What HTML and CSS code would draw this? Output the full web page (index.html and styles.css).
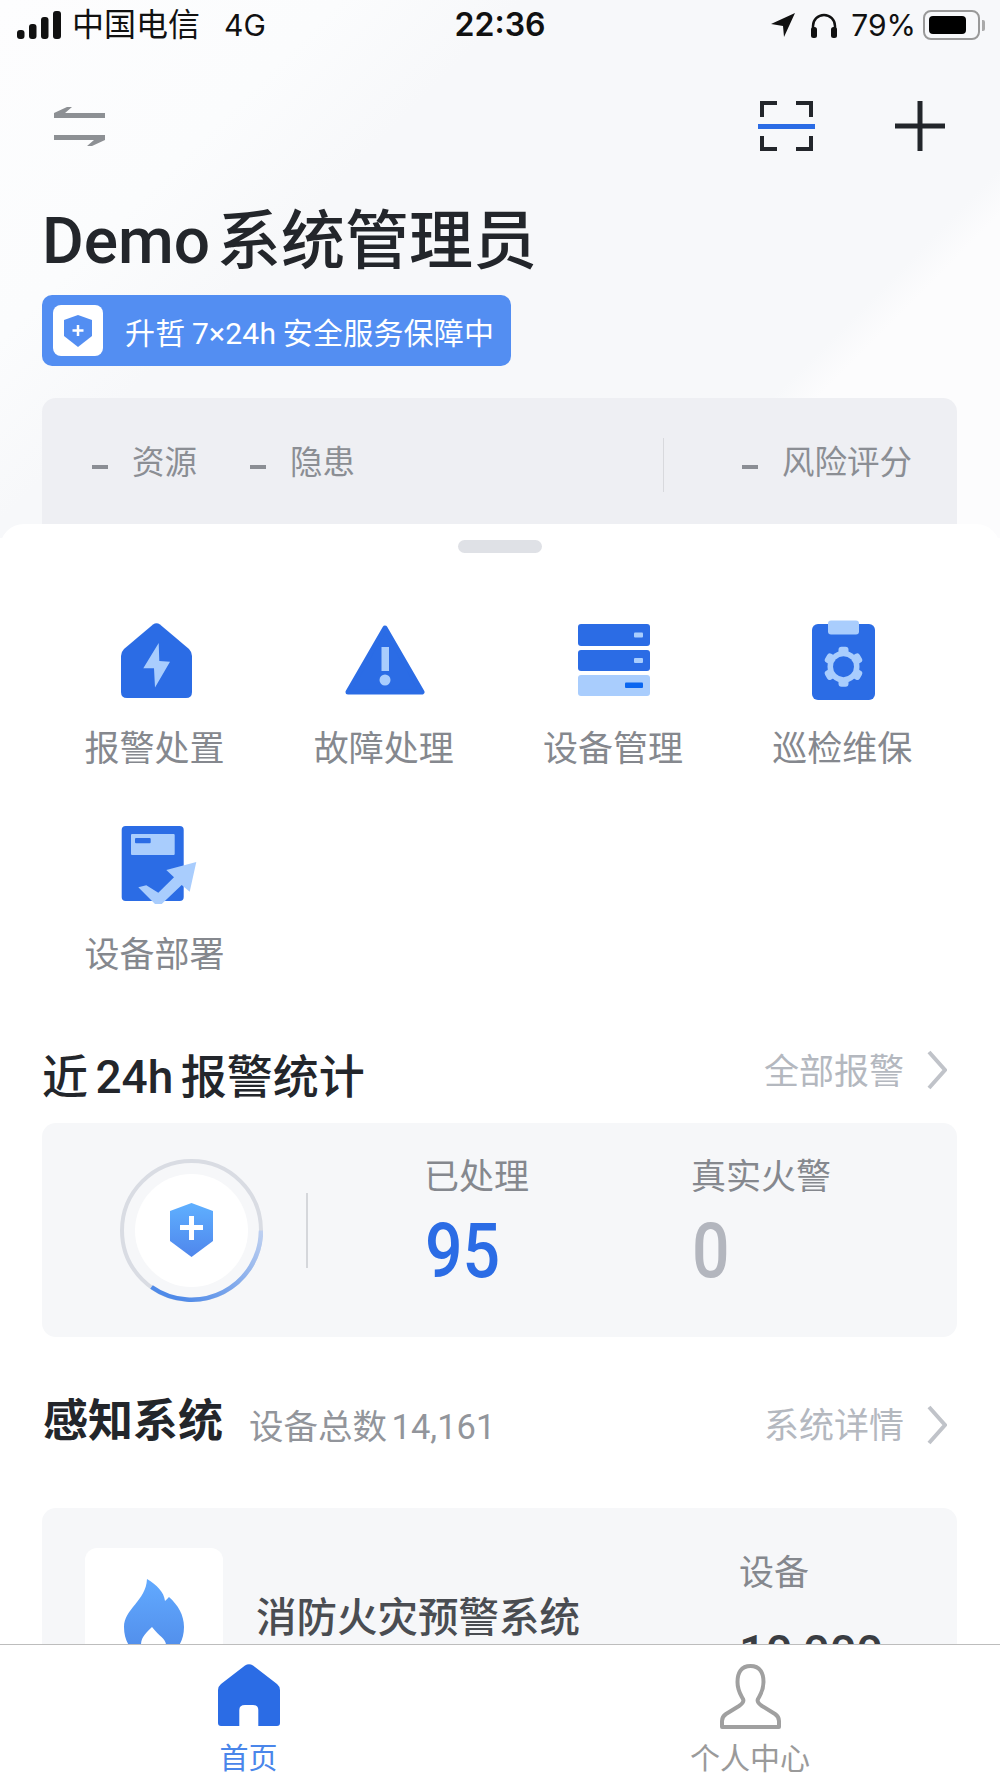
FILE: index.html
```html
<!DOCTYPE html>
<html lang="zh-CN">
<head>
    <meta charset="UTF-8">
    <meta name="viewport" content="width=device-width, initial-scale=1.0">
    <title>Demo 系统管理员</title>
    <link rel="stylesheet" href="styles.css">
</head>
<body>
<div class="app">
    <div class="main">
        <div class="head">
            <div class="status-bar">
                <div class="status-left">
                    <svg class="signal" width="44" height="28" viewBox="0 0 44 28">
                        <rect x="0" y="19" width="7.5" height="9" rx="3"/>
                        <rect x="12" y="13" width="7.5" height="15" rx="3"/>
                        <rect x="24" y="6" width="7.5" height="22" rx="3"/>
                        <rect x="36" y="0" width="8" height="28" rx="3"/>
                    </svg>
                    <span class="carrier">中国电信</span>
                    <span class="network">4G</span>
                </div>
                <div class="status-time">22:36</div>
                <div class="status-right">
                    <svg width="24" height="24" viewBox="0 0 24 24"><path d="M0 11 24 0 13 24 12 13Z" fill="#111"/></svg>
                    <svg class="headphones" width="28" height="25" viewBox="0 0 28 25">
                        <path d="M3 18V13a11 11 0 0 1 22 0v5" fill="none" stroke="#111" stroke-width="2.5"/>
                        <rect x="1" y="14" width="6" height="11" rx="2.5" fill="#111"/>
                        <rect x="21" y="14" width="6" height="11" rx="2.5" fill="#111"/>
                    </svg>
                    <span class="percent">79%</span>
                    <div class="battery"><div class="battery-level"></div></div>
                    <div class="battery-nub"></div>
                </div>
            </div>

            <div class="top-actions">
                <svg width="51" height="39" viewBox="0 0 51 39" fill="#8d9094">
                    <path d="M0 6 13 0h5l-7 6h40v5H0Z"/>
                    <path d="M0 28h51v5l-13 6h-5l7-6H0Z"/>
                </svg>
                <div class="top-actions-right">
                    <svg width="57" height="50" viewBox="0 0 57 50" fill="none">
                        <path d="M4 16V2h15M38 2h15v14M4 35v13h15M38 48h15V35" stroke="#23262b" stroke-width="4"/>
                        <path d="M0 25.500h57" stroke="#2b6ce5" stroke-width="5"/>
                    </svg>
                    <svg width="50" height="50" viewBox="0 0 50 50" fill="none">
                        <path d="M25 0v50M0 25h50" stroke="#23262b" stroke-width="5"/>
                    </svg>
                </div>
            </div>

            <h1 class="title">Demo 系统管理员</h1>

            <div class="badge">
                <div class="badge-icon">
                    <svg width="28" height="32" viewBox="0 0 28 32">
                        <path d="M14 0 28 5V21L14 32 0 21V5Z" fill="#538ef2"/>
                        <path d="M14 10v11M8.500 15.500h11" stroke="#fff" stroke-width="2.500"/>
                    </svg>
                </div>
                <span>升哲 7×24h 安全服务保障中</span>
            </div>

            <div class="overview">
                <div class="overview-left">
                    <div class="overview-item"><i></i><span>资源</span></div>
                    <div class="overview-item"><i></i><span>隐患</span></div>
                </div>
                <div class="overview-right">
                    <div class="overview-item"><i></i><span>风险评分</span></div>
                </div>
            </div>
        </div>

        <div class="sheet">
            <div class="handle"></div>

            <div class="menu">
                <div class="menu-item">
                    <div class="menu-icon">
                        <svg width="71" height="75" viewBox="0 0 71 75">
                            <path d="M32 1.500Q35.500-1 39 1.500L68 26Q71 29 71 33V69Q71 75 65 75H6Q0 75 0 69V33Q0 29 3 26Z" fill="#2b6ce5"/>
                            <path d="M37.700 20 22.300 45.300H33L34 64.500 49 38.700 38.300 38Z" fill="#a9cdfd"/>
                        </svg>
                    </div>
                    <div class="menu-label">报警处置</div>
                </div>
                <div class="menu-item">
                    <div class="menu-icon">
                        <svg width="80" height="70" viewBox="0 0 80 70">
                            <path d="M40 3 77 67H3Z" fill="#2b6ce5" stroke="#2b6ce5" stroke-width="5" stroke-linejoin="round"/>
                            <rect x="36.500" y="22" width="7.500" height="24" fill="#a9cdfd"/>
                            <circle cx="40" cy="55" r="5.500" fill="#a9cdfd"/>
                        </svg>
                    </div>
                    <div class="menu-label">故障处理</div>
                </div>
                <div class="menu-item">
                    <div class="menu-icon">
                        <svg width="72" height="72" viewBox="0 0 72 72">
                            <rect x="0" y="0" width="72" height="22" rx="3" fill="#2b6ce5"/>
                            <rect x="0" y="26" width="72" height="21" rx="3" fill="#2b6ce5"/>
                            <rect x="0" y="51" width="72" height="21" rx="3" fill="#a9cdfd"/>
                            <rect x="56" y="8.500" width="9" height="5" rx="1" fill="#a9cdfd"/>
                            <rect x="56" y="34" width="9" height="5" rx="1" fill="#a9cdfd"/>
                            <rect x="47" y="58.500" width="18" height="5.500" rx="1" fill="#0a66f0"/>
                        </svg>
                    </div>
                    <div class="menu-label">设备管理</div>
                </div>
                <div class="menu-item">
                    <div class="menu-icon">
                        <svg width="63" height="80" viewBox="0 0 63 80">
                            <rect x="0" y="4" width="63" height="76" rx="6" fill="#2b6ce5"/>
                            <rect x="16" y="0.500" width="31" height="14" rx="3" fill="#a9cdfd"/>
                            <g transform="translate(31.500 46.700)" fill="#a9cdfd">
                                <rect x="-5" y="-20" width="10" height="40" rx="3"/>
                                <rect x="-5" y="-20" width="10" height="40" rx="3" transform="rotate(60)"/>
                                <rect x="-5" y="-20" width="10" height="40" rx="3" transform="rotate(120)"/>
                                <circle r="16"/>
                                <circle r="10.500" fill="#2b6ce5"/>
                            </g>
                        </svg>
                    </div>
                    <div class="menu-label">巡检维保</div>
                </div>
                <div class="menu-item">
                    <div class="menu-icon">
                        <svg class="deploy" width="77" height="80" viewBox="0 0 77 80">
                            <rect x="0.700" y="0" width="62" height="75" rx="4" fill="#2b6ce5"/>
                            <rect x="10" y="8" width="43.700" height="21" rx="1" fill="#a9cdfd"/>
                            <rect x="14" y="12" width="15.700" height="5.300" rx="1" fill="#2b6ce5"/>
                            <path d="M17.300 61.300 25.300 59.300 37.300 66.700 53 51.300 45.300 44 75.300 36 68.700 65.700 60.700 59 40.700 78H34Z" fill="#a9cdfd"/>
                        </svg>
                    </div>
                    <div class="menu-label">设备部署</div>
                </div>
            </div>

            <div class="section-head section-alarm">
                <h2 class="section-title">近 24h 报警统计</h2>
                <div class="section-link">
                    <span>全部报警</span>
                    <svg width="20" height="40" viewBox="0 0 20 40" fill="none"><path d="M2 2 18 20 2 38" stroke="#c0c3c9" stroke-width="4"/></svg>
                </div>
            </div>

            <div class="alarm-card">
                <div class="ring">
                    <div class="ring-inner">
                        <svg width="43" height="54" viewBox="0 0 43 54">
                            <defs>
                                <linearGradient id="shield" x1="0" y1="0" x2="0" y2="1">
                                    <stop offset="0" stop-color="#5fb0ff"/>
                                    <stop offset="1" stop-color="#4f86ec"/>
                                </linearGradient>
                            </defs>
                            <path d="M21.500 0 43 8V38L21.500 54 0 38V8Z" fill="url(#shield)"/>
                            <path d="M21.500 13v24M10 24.500h23" stroke="#fff" stroke-width="5"/>
                        </svg>
                    </div>
                    <svg class="ring-track" width="143" height="143" viewBox="0 0 143 143" fill="none">
                        <defs>
                            <linearGradient id="arc" gradientUnits="userSpaceOnUse" x1="141" y1="60" x2="60" y2="140">
                                <stop offset="0" stop-color="#c6d5f1"/>
                                <stop offset="1" stop-color="#4f8ae8"/>
                            </linearGradient>
                        </defs>
                        <circle cx="71.500" cy="71.500" r="69.500" stroke="#d9dce3" stroke-width="4"/>
                        <path d="M141 71.500A69.500 69.500 0 0 1 31.500 128" stroke="url(#arc)" stroke-width="4.500"/>
                    </svg>
                </div>
                <div class="alarm-divider"></div>
                <div class="alarm-stat alarm-done">
                    <div class="alarm-label">已处理</div>
                    <div class="alarm-num blue">95</div>
                </div>
                <div class="alarm-stat">
                    <div class="alarm-label">真实火警</div>
                    <div class="alarm-num gray">0</div>
                </div>
            </div>

            <div class="section-head section-system">
                <div class="section-left">
                    <h2 class="section-title bold">感知系统</h2>
                    <span class="section-sub">设备总数 14,161</span>
                </div>
                <div class="section-link">
                    <span>系统详情</span>
                    <svg width="20" height="40" viewBox="0 0 20 40" fill="none"><path d="M2 2 18 20 2 38" stroke="#c0c3c9" stroke-width="4"/></svg>
                </div>
            </div>

            <div class="system-card">
                <div class="system-icon">
                    <svg width="60" height="80" viewBox="0 0 60 80">
                        <defs>
                            <linearGradient id="flame" x1="0" y1="0" x2="0" y2="1">
                                <stop offset="0" stop-color="#62aaff"/>
                                <stop offset="1" stop-color="#4f8ae8"/>
                            </linearGradient>
                        </defs>
                        <path fill-rule="evenodd" d="M23 0C33 6 40 13 41 22 43 20 44 19 45 18 54 26 60 36 60 48 60 68 46 80 30 80 14 80 0 68 0 48 0 30 22 22 23 0ZM28 48C22 54 17 58 17 66 17 74 22 78 29 78 36 78 42 74 42 66 42 60 36 58 28 48Z" fill="url(#flame)"/>
                    </svg>
                </div>
                <div class="system-name">消防火灾预警系统</div>
                <div class="system-stat">
                    <div class="system-stat-label">设备</div>
                    <div class="system-stat-num">10,000</div>
                </div>
            </div>
        </div>
    </div>

    <div class="tabbar">
        <div class="tab tab-home">
            <svg width="62" height="63" viewBox="0 0 62 63">
                <path fill-rule="evenodd" d="M27 1.500Q31-1 35 1.500L59 20Q62 22.500 62 26V59Q62 62 59 62H40.300V46Q40.300 41 35 41H27Q21.300 41 21.300 46V62H3Q0 62 0 59V26Q0 22.500 3 20Z" fill="#2b6ce5"/>
            </svg>
            <div class="tab-label active">首页</div>
        </div>
        <div class="tab">
            <svg width="61" height="65" viewBox="0 0 61 65">
                <path d="M30.500 2C21 2 17.500 9 17.500 18 17.500 27 21 31 23 35 24.500 38 22 40 19 42L6 50C3 52 2 54 2 57V63H59V57C59 54 58 52 55 50L42 42C39 40 36.500 38 38 35 40 31 43.500 27 43.500 18 43.500 9 40 2 30.500 2Z" fill="none" stroke="#a0a0a0" stroke-width="4" stroke-linejoin="round"/>
            </svg>
            <div class="tab-label">个人中心</div>
        </div>
    </div>
</div>
</body>
</html>
```

FILE: styles.css
```css
* {
    box-sizing: border-box;
}
body {
    margin: 0;
    background-color: white;
    font-family: Roboto, "Noto Sans CJK SC", sans-serif;
    color: #23262b;
}
.app {
    height: 1778px;
    display: flex;
    flex-direction: column;
    overflow: hidden;
}
.main {
    flex: 1;
    min-height: 0;
    overflow: hidden;
}

/* top area */
.head {
    height: 538px;
    padding: 0 43px 0 42px;
    background: linear-gradient(135deg, #fdfdfe 0%, #fbfcfd 22%, #f7f8fa 34%, #f7f8fa 76%, #fcfcfd 79%, #fcfcfd 100%);
}
.status-bar {
    height: 50px;
    margin: 0 -43px 0 -42px;
    padding: 0 15px 0 17px;
    display: grid;
    grid-template-columns: 1fr auto 1fr;
    align-items: center;
    color: #111;
    font-family: Inter, "Noto Sans CJK SC", sans-serif;
}
.status-left,
.status-right {
    display: flex;
    align-items: center;
}
.status-right {
    justify-content: flex-end;
}
.signal {
    fill: #111;
    margin-right: 11px;
}
.carrier {
    font-size: 32px;
    line-height: 50px;
    margin-right: 24px;
}
.network {
    font-size: 30px;
    line-height: 50px;
}
.status-time {
    margin-right: 2px;
    font-size: 32px;
    font-weight: 600;
    line-height: 50px;
}
.headphones {
    margin-left: 15px;
}
.percent {
    font-size: 30px;
    line-height: 50px;
    margin: 0 7px 0 13px;
}
.battery {
    width: 57px;
    height: 30px;
    padding: 4px;
    border: 2px solid #999;
    border-radius: 8px;
}
.battery-level {
    width: 37px;
    height: 100%;
    background-color: black;
    border-radius: 4px;
}
.battery-nub {
    width: 3px;
    height: 11px;
    margin-left: 2px;
    background-color: #aaa;
    border-radius: 0 2px 2px 0;
}
.top-actions {
    height: 50px;
    margin: 51px 12px 0 12px;
    display: flex;
    align-items: center;
    justify-content: space-between;
}
.top-actions-right {
    display: flex;
    align-items: center;
    gap: 80px;
}
.title {
    margin: 53px 0 0 0;
    font-size: 64px;
    font-weight: 500;
    line-height: 76px;
    word-spacing: -9px;
    color: #23262b;
    white-space: nowrap;
}
.badge {
    width: 469px;
    height: 71px;
    margin-top: 15px;
    padding: 0 11px;
    display: flex;
    align-items: center;
    gap: 22px;
    background-color: #538ef2;
    border-radius: 10px;
    color: white;
    font-size: 30px;
    letter-spacing: 0.2px;
    word-spacing: -1px;
    white-space: nowrap;
}
.badge-icon {
    width: 50px;
    height: 51px;
    display: flex;
    align-items: center;
    justify-content: center;
    background-color: white;
    border-radius: 8px;
    flex: none;
}
.overview {
    height: 140px;
    margin-top: 32px;
    padding: 40px 45px 0 50px;
    display: flex;
    align-items: flex-start;
    justify-content: space-between;
    background-color: #eeeff3;
    border-radius: 14px 14px 0 0;
}
.overview-left {
    display: flex;
    gap: 53px;
}
.overview-right {
    height: 54px;
    padding-left: 78px;
    border-left: 1px solid #d8d9dd;
}
.overview-item {
    height: 54px;
    display: flex;
    align-items: center;
    font-size: 32.5px;
    color: #8b8e94;
}
.overview-item span {
    padding-bottom: 11px;
}
.overview-item i {
    display: block;
    width: 16px;
    height: 4px;
    margin-top: 3px;
    margin-right: 24px;
    background-color: #8b8e94;
}

/* white sheet */
.sheet {
    position: relative;
    margin-top: -14px;
    padding: 16px 43px 0 42px;
    background-color: white;
    border-radius: 24px 24px 0 0;
}
.handle {
    width: 84px;
    height: 13px;
    margin: 0 auto;
    background-color: #dfe1e6;
    border-radius: 7px;
}
.menu {
    margin: 67px -3px 0 -2px;
    display: grid;
    grid-template-columns: repeat(4, 229.2px);
    row-gap: 52px;
}
.menu-item {
    display: flex;
    flex-direction: column;
    align-items: center;
}
.menu-icon {
    height: 80px;
    margin-left: 3px;
    display: flex;
    align-items: center;
    justify-content: center;
}
.deploy {
    margin-left: 6px;
}
.menu-label {
    margin-top: 26px;
    font-size: 35px;
    line-height: 48px;
    color: #85888e;
    white-space: nowrap;
}
.section-head {
    height: 60px;
    display: flex;
    align-items: center;
    justify-content: space-between;
}
.section-alarm {
    margin-top: 65px;
}
.section-system {
    margin-top: 55px;
}
.section-left {
    display: flex;
    align-items: center;
    gap: 26px;
}
.section-title {
    margin: 0;
    font-size: 46px;
    font-weight: 500;
    line-height: 60px;
    word-spacing: -4px;
    color: #23262b;
    white-space: nowrap;
}
.section-alarm .section-title {
    padding-top: 4px;
}
.section-title.bold {
    margin-left: 1px;
    font-size: 45px;
    font-weight: 700;
}
.section-sub {
    padding-top: 4px;
    font-size: 34.5px;
    word-spacing: -4px;
    color: #92959b;
    white-space: nowrap;
}
.section-link {
    display: flex;
    align-items: center;
    gap: 23px;
    padding-right: 10px;
    font-size: 35px;
    color: #b4b8bf;
    white-space: nowrap;
}
.section-link span {
    padding-bottom: 4px;
}
.section-alarm .section-link {
    padding-bottom: 10px;
}
.section-system .section-link {
    padding-top: 5px;
}

/* alarm card */
.alarm-card {
    height: 214px;
    margin-top: 18px;
    padding-left: 78px;
    display: flex;
    align-items: center;
    background-color: #f6f7f9;
    border-radius: 14px;
}
.ring {
    position: relative;
    width: 143px;
    height: 143px;
    display: flex;
    align-items: center;
    justify-content: center;
    flex: none;
}
.ring-inner {
    width: 113px;
    height: 113px;
    display: flex;
    align-items: center;
    justify-content: center;
    background-color: white;
    border-radius: 50%;
}
.ring-track {
    position: absolute;
    top: 0;
    left: 0;
}
.alarm-divider {
    width: 2px;
    height: 75px;
    margin-left: 43px;
    margin-right: 116px;
    background-color: #d5d7db;
    flex: none;
}
.alarm-stat {
    align-self: flex-start;
    padding-top: 31px;
}
.alarm-done {
    width: 267px;
}
.alarm-label {
    font-size: 35px;
    line-height: 48px;
    color: #85888e;
}
.alarm-num {
    margin-top: 14px;
    margin-left: 1px;
    font-size: 76px;
    font-weight: 500;
    line-height: 70px;
    transform: scaleX(0.87);
    transform-origin: left center;
}
.alarm-num.blue {
    color: #2b6ce5;
}
.alarm-num.gray {
    color: #b3b6be;
}

/* system card */
.system-card {
    height: 240px;
    margin-top: 56px;
    padding: 40px 0 0 43px;
    display: flex;
    align-items: flex-start;
    background-color: #f6f7f9;
    border-radius: 14px;
}
.system-icon {
    width: 138px;
    height: 137px;
    padding-top: 31px;
    display: flex;
    justify-content: center;
    align-items: flex-start;
    background-color: white;
    border-radius: 12px;
    flex: none;
}
.system-name {
    width: 483px;
    margin: 45px 0 0 33px;
    font-size: 40.5px;
    font-weight: 500;
    line-height: 50px;
    color: #4a4d52;
    white-space: nowrap;
}
.system-stat {
    padding-top: 2px;
}
.system-stat-label {
    font-size: 35px;
    line-height: 48px;
    color: #85888e;
}
.system-stat-num {
    margin-top: 24px;
    font-size: 47px;
    font-weight: 500;
    line-height: 60px;
    color: #3a3d42;
}

/* bottom tabs */
.tabbar {
    height: 134px;
    display: grid;
    grid-template-columns: 1fr 1fr;
    border-top: 1px solid #bdbdbd;
    background-color: white;
    flex: none;
}
.tab {
    padding-top: 19px;
    display: flex;
    flex-direction: column;
    align-items: center;
}
.tab-home {
    padding-right: 3px;
}
.tab-label {
    margin-top: 10px;
    font-size: 30px;
    line-height: 40px;
    color: #9a9a9a;
    white-space: nowrap;
}
.tab-label.active {
    margin-top: 12px;
    font-size: 29px;
    color: #4a86ea;
}
```
